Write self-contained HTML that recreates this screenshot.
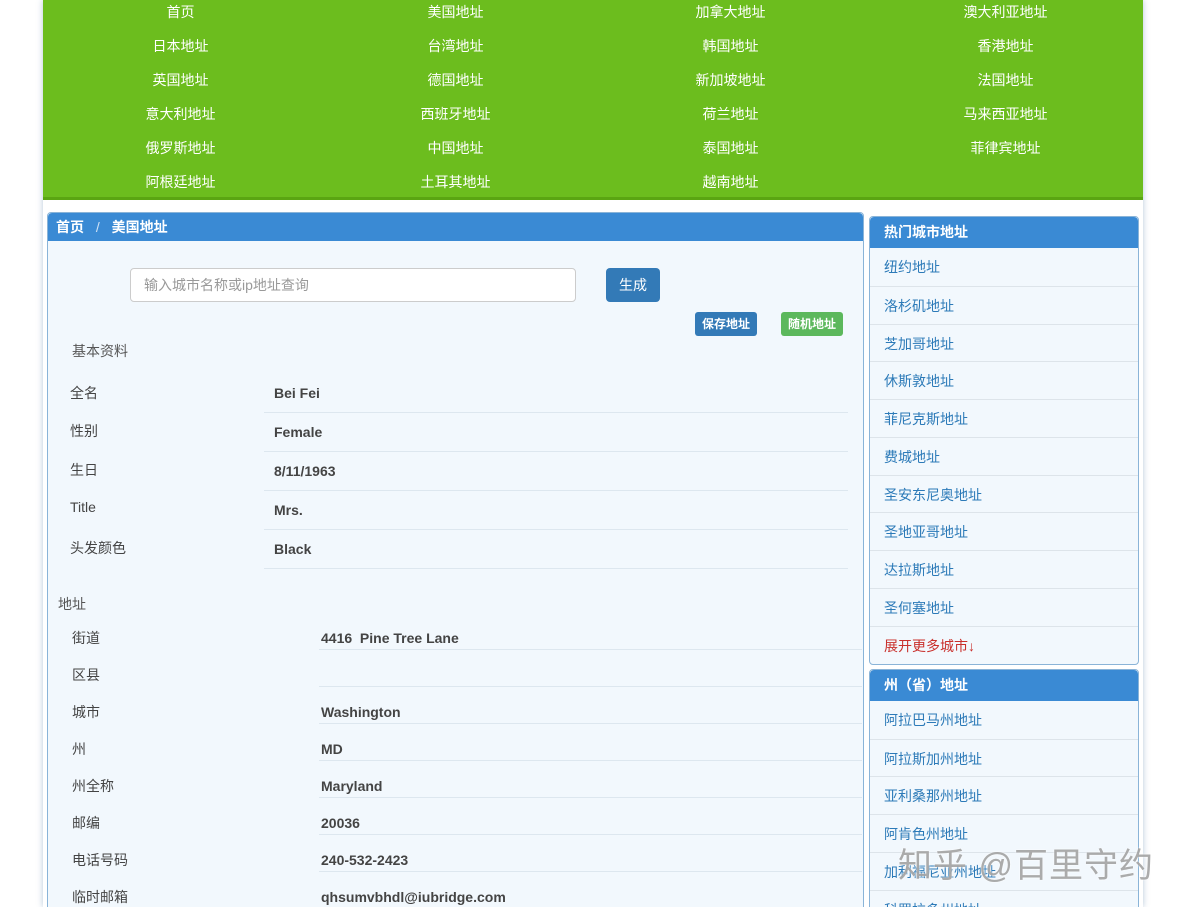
<!DOCTYPE html>
<html style="width:1180px;height:907px;overflow:hidden"><head><meta charset="utf-8"><style>
*{margin:0;padding:0;box-sizing:border-box}
body{width:1180px;height:907px;overflow:hidden;background:#fff;font-family:"Liberation Sans","Noto Sans CJK SC",sans-serif;font-size:14px;color:#333;position:relative}
.a{position:absolute;white-space:nowrap}
#wrap{position:absolute;left:43px;top:0;width:1100px;height:907px;background:#fff;box-shadow:0 0 6px rgba(90,130,170,.45)}
#nav{position:absolute;left:43px;top:0;width:1100px;height:200px;background:#6cbd1e;border-bottom:3px solid #5aa512}
#nav span{position:absolute;width:275px;text-align:center;color:#fff;font-size:14px;line-height:20px}
.panel{position:absolute;background:#f2f8fd;border:1px solid #8ab4d8;border-radius:4px}
.hd{position:absolute;background:#3a8ad4;color:#fff;font-weight:bold;font-size:14px;border-radius:4px 4px 0 0}
.lab{position:absolute;font-size:14px;color:#444}
.val{position:absolute;font-size:14px;font-weight:bold;color:#444}
.ln{position:absolute;height:1px;background:#dde7ef}
.it{position:absolute;left:870px;width:268px;height:38px;border-top:1px solid #dde4ea;color:#2c7ab8;font-size:14px;padding-left:14px;line-height:38px}
</style></head><body>
<div id="wrap"></div>
<div id="nav">
<span style="left:0;top:2px">首页</span><span style="left:275px;top:2px">美国地址</span><span style="left:550px;top:2px">加拿大地址</span><span style="left:825px;top:2px">澳大利亚地址</span>
<span style="left:0;top:36px">日本地址</span><span style="left:275px;top:36px">台湾地址</span><span style="left:550px;top:36px">韩国地址</span><span style="left:825px;top:36px">香港地址</span>
<span style="left:0;top:70px">英国地址</span><span style="left:275px;top:70px">德国地址</span><span style="left:550px;top:70px">新加坡地址</span><span style="left:825px;top:70px">法国地址</span>
<span style="left:0;top:104px">意大利地址</span><span style="left:275px;top:104px">西班牙地址</span><span style="left:550px;top:104px">荷兰地址</span><span style="left:825px;top:104px">马来西亚地址</span>
<span style="left:0;top:138px">俄罗斯地址</span><span style="left:275px;top:138px">中国地址</span><span style="left:550px;top:138px">泰国地址</span><span style="left:825px;top:138px">菲律宾地址</span>
<span style="left:0;top:172px">阿根廷地址</span><span style="left:275px;top:172px">土耳其地址</span><span style="left:550px;top:172px">越南地址</span>
</div>

<div class="panel" style="left:47px;top:212px;width:817px;height:720px"></div>
<div class="hd" style="left:48px;top:213px;width:815px;height:28px;line-height:28px;padding-left:8px">首页 <span style="color:#cfe2f5;font-weight:normal;margin:0 8px">/</span> 美国地址</div>
<div class="a" style="left:130px;top:268px;width:446px;height:34px;background:#fff;border:1px solid #ccc;border-radius:4px;color:#999;font-size:14px;line-height:32px;padding-left:13px">输入城市名称或ip地址查询</div>
<div class="a" style="left:606px;top:268px;width:54px;height:34px;background:#337ab7;border-radius:4px;color:#fff;text-align:center;line-height:34px">生成</div>
<div class="a" style="left:695px;top:312px;width:62px;height:24px;background:#337ab7;border-radius:3px;color:#fff;text-align:center;line-height:24px;font-size:12px;font-weight:bold">保存地址</div>
<div class="a" style="left:781px;top:312px;width:62px;height:24px;background:#5cb85c;border-radius:3px;color:#fff;text-align:center;line-height:24px;font-size:12px;font-weight:bold">随机地址</div>
<div class="a" style="left:72px;top:341px;color:#555">基本资料</div>

<div class="lab" style="left:70px;top:383px">全名</div><div class="val" style="left:274px;top:385px">Bei Fei</div><div class="ln" style="left:264px;top:412px;width:584px"></div>
<div class="lab" style="left:70px;top:421px">性别</div><div class="val" style="left:274px;top:424px">Female</div><div class="ln" style="left:264px;top:451px;width:584px"></div>
<div class="lab" style="left:70px;top:460px">生日</div><div class="val" style="left:274px;top:463px">8/11/1963</div><div class="ln" style="left:264px;top:490px;width:584px"></div>
<div class="lab" style="left:70px;top:499px">Title</div><div class="val" style="left:274px;top:502px">Mrs.</div><div class="ln" style="left:264px;top:529px;width:584px"></div>
<div class="lab" style="left:70px;top:538px">头发颜色</div><div class="val" style="left:274px;top:541px">Black</div><div class="ln" style="left:264px;top:568px;width:584px"></div>

<div class="a" style="left:58px;top:594px;color:#555">地址</div>
<div class="lab" style="left:72px;top:628px">街道</div><div class="val" style="left:321px;top:630px">4416&nbsp; Pine Tree Lane</div><div class="ln" style="left:319px;top:649px;width:543px"></div>
<div class="lab" style="left:72px;top:665px">区县</div><div class="ln" style="left:319px;top:686px;width:543px"></div>
<div class="lab" style="left:72px;top:702px">城市</div><div class="val" style="left:321px;top:704px">Washington</div><div class="ln" style="left:319px;top:723px;width:543px"></div>
<div class="lab" style="left:72px;top:739px">州</div><div class="val" style="left:321px;top:741px">MD</div><div class="ln" style="left:319px;top:760px;width:543px"></div>
<div class="lab" style="left:72px;top:776px">州全称</div><div class="val" style="left:321px;top:778px">Maryland</div><div class="ln" style="left:319px;top:797px;width:543px"></div>
<div class="lab" style="left:72px;top:813px">邮编</div><div class="val" style="left:321px;top:815px">20036</div><div class="ln" style="left:319px;top:834px;width:543px"></div>
<div class="lab" style="left:72px;top:850px">电话号码</div><div class="val" style="left:321px;top:852px">240-532-2423</div><div class="ln" style="left:319px;top:871px;width:543px"></div>
<div class="lab" style="left:72px;top:887px">临时邮箱</div><div class="val" style="left:321px;top:889px">qhsumvbhdl@iubridge.com</div>

<div class="panel" style="left:869px;top:216px;width:270px;height:449px"></div>
<div class="hd" style="left:870px;top:217px;width:268px;height:31px;line-height:31px;padding-left:14px">热门城市地址</div>
<div class="it" style="top:248px;border-top:none">纽约地址</div>
<div class="it" style="top:286px">洛杉矶地址</div>
<div class="it" style="top:324px">芝加哥地址</div>
<div class="it" style="top:361px">休斯敦地址</div>
<div class="it" style="top:399px">菲尼克斯地址</div>
<div class="it" style="top:437px">费城地址</div>
<div class="it" style="top:475px">圣安东尼奥地址</div>
<div class="it" style="top:512px">圣地亚哥地址</div>
<div class="it" style="top:550px">达拉斯地址</div>
<div class="it" style="top:588px">圣何塞地址</div>
<div class="it" style="top:626px;color:#c9302c">展开更多城市↓</div>

<div class="panel" style="left:869px;top:669px;width:270px;height:260px"></div>
<div class="hd" style="left:870px;top:670px;width:268px;height:31px;line-height:31px;padding-left:14px">州（省）地址</div>
<div class="it" style="top:701px;border-top:none">阿拉巴马州地址</div>
<div class="it" style="top:739px">阿拉斯加州地址</div>
<div class="it" style="top:776px">亚利桑那州地址</div>
<div class="it" style="top:814px">阿肯色州地址</div>
<div class="it" style="top:852px">加利福尼亚州地址</div>
<div class="it" style="top:890px">科罗拉多州地址</div>

<div class="a" style="left:898px;top:838px;font-size:34px;color:rgba(150,150,150,.8);letter-spacing:1px;text-shadow:0 0 2px #fff">知乎 @百里守约</div>
</body></html>
